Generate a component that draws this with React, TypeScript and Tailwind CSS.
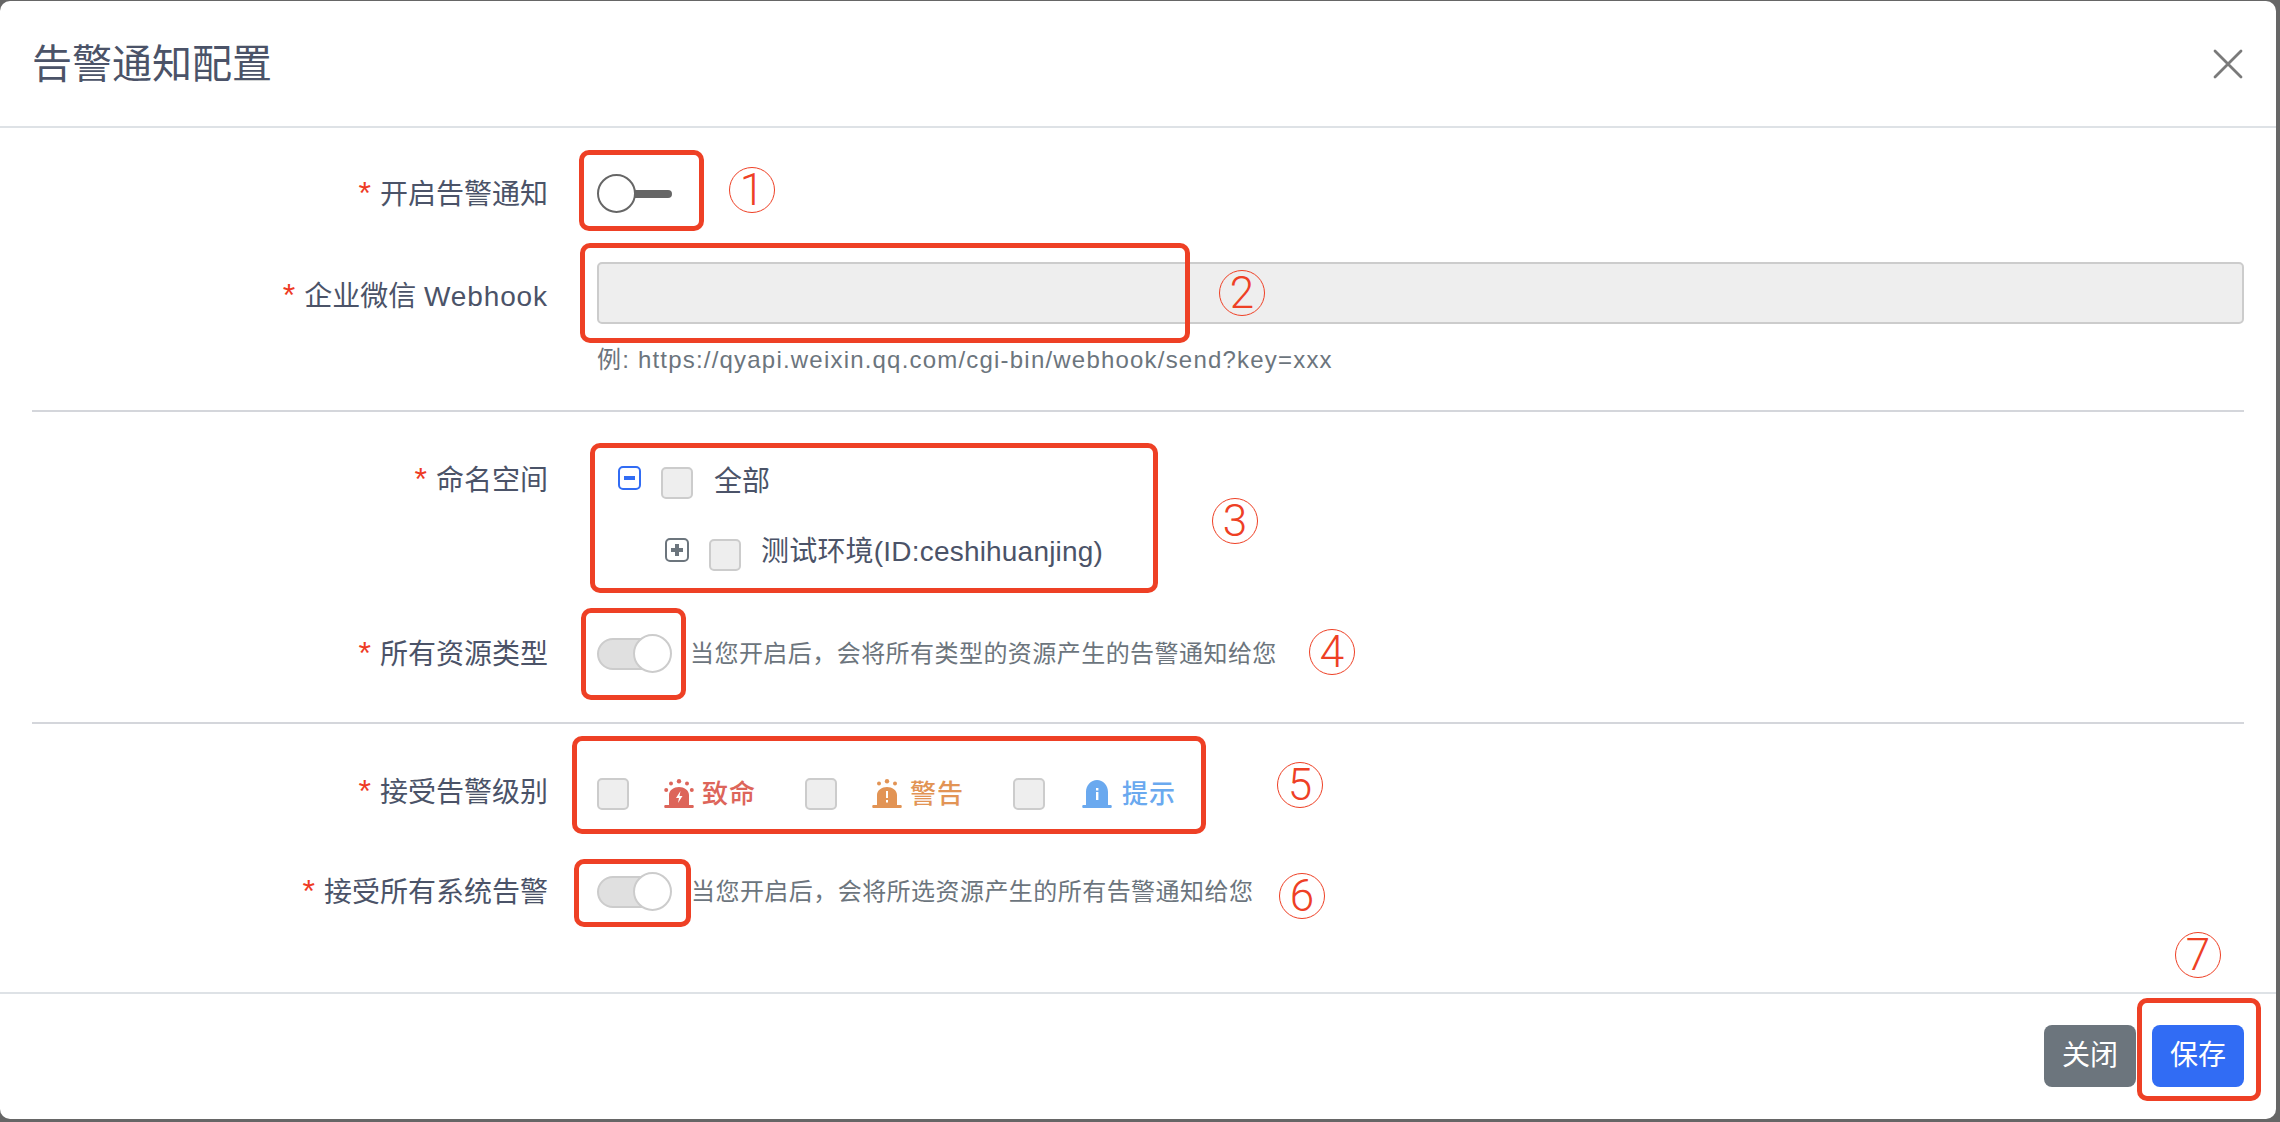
import React from "react";

const FONT = "font-['Liberation_Sans','Noto_Sans_CJK_SC',sans-serif]";

function Alarm({ color, kind, className }: { color: string; kind: "bolt" | "warn" | "info"; className: string }) {
  return (
    <svg viewBox="0 0 30 30" className={className} aria-hidden="true">
      {kind !== "info" && (
        <g fill={color}>
          <circle cx="15" cy="2.200" r="2.200" />
          <circle cx="7" cy="4.500" r="2" />
          <circle cx="23" cy="4.500" r="2" />
          {kind === "bolt" && <circle cx="2.200" cy="11" r="2" />}
          {kind === "bolt" && <circle cx="27.800" cy="11" r="2" />}
        </g>
      )}
      <path
        fill={color}
        d={
          kind === "info"
            ? "M4 26V13C4 6 9 1 15 1s11 5 11 12v13h3c1 0 1 3 0 3H1c-1 0-1-3 0-3z"
            : "M5 26V16C5 11 10 8 15 8s10 3 10 8v10h4c1 0 1 3 0 3H1c-1 0-1-3 0-3z"
        }
      />
      {kind === "bolt" && <path fill="#fff" d="M16.500 12l-4.500 7h3l-1 5 4.500-7h-3z" />}
      {kind === "warn" && <path fill="#fff" d="M14 12h2v7h-2zM14 21h2v2.500h-2z" />}
      {kind === "info" && <path fill="#fff" d="M14 9h2.400v2.500H14zM14 13h2.400v8H14z" />}
    </svg>
  );
}

function Label({ children, className = "" }: { children: React.ReactNode; className?: string }) {
  return (
    <div className={`w-[516px] shrink-0 text-right text-[28px] leading-[40px] text-[#4b5368] whitespace-nowrap ${className}`}>
      <span className="text-[#ee3a24] text-[32px] leading-[32px] mr-[9px]">*</span>
      {children}
    </div>
  );
}

function Check() {
  return <span className="block w-8 h-8 shrink-0 bg-[#eeeeee] border-2 border-[#cccccc] rounded-[5px]" />;
}

function Switch() {
  return (
    <span className="relative block w-[75px] h-[39px] shrink-0">
      <span className="absolute left-0 top-[4px] w-[60px] h-8 rounded-full bg-[#e0e0e0] border-2 border-[#cccccc]" />
      <span className="absolute left-[36px] top-0 w-[39px] h-[39px] rounded-full bg-white border-2 border-[#cccccc]" />
    </span>
  );
}

function Level({ color, kind, text, iconClass }: { color: string; kind: "bolt" | "warn" | "info"; text: string; iconClass: string }) {
  return (
    <div className="flex items-center gap-2">
      <Alarm color={color} kind={kind} className={iconClass} />
      <span className="text-[26px] leading-[30px] font-medium tracking-[1px]" style={{ color }}>
        {text}
      </span>
    </div>
  );
}

export default function App() {
  return (
    <div className={`relative w-[2280px] h-[1122px] overflow-hidden bg-[#666666] pt-px pr-1 pb-[3px] ${FONT}`}>
      <div className="flex flex-col h-full bg-white rounded-[10px]">
        <header className="flex items-center justify-between h-[125px] shrink-0 pl-8 pr-[33px]">
          <h1 className="text-[40px] leading-[48px] text-[#4b5368] font-normal">告警通知配置</h1>
          <svg viewBox="0 0 30 30" className="w-[30px] h-[30px]" aria-hidden="true">
            <path d="M2 2l26 26M28 2L2 28" stroke="#7a7a7a" strokeWidth="2.800" strokeLinecap="round" />
          </svg>
        </header>

        <main className="flex-1 flex flex-col px-8 border-t-2 border-[#dee2e6]">
          <div className="flex items-center gap-[49px] mt-[46px] h-[39px]">
            <Label className="pt-[2px]">开启告警通知</Label>
            <span className="relative block w-[75px] h-[39px]">
              <span className="absolute left-[30px] top-[16px] w-[45px] h-2 rounded-full bg-[#666666]" />
              <span className="absolute left-0 top-0 w-[39px] h-[39px] rounded-full bg-white border-2 border-[#666666]" />
            </span>
          </div>

          <div className="flex items-start gap-[49px] mt-[49px]">
            <Label className="pt-[15px]">
              企业微信 <span className="tracking-[0.9px]">Webhook</span>
            </Label>
            <div className="flex-1">
              <div className="h-[62px] bg-[#eeeeee] border-2 border-[#cccccc] rounded-[5px]" />
              <p className="mt-[22px] text-[24px] leading-[28px] tracking-[1.2px] text-[#6c757d] whitespace-nowrap">
                例: https://qyapi.weixin.qq.com/cgi-bin/webhook/send?key=xxx
              </p>
            </div>
          </div>

          <hr className="mt-[36px] border-0 h-[2px] bg-[#d4d6db]" />

          <div className="flex items-start gap-[49px] mt-[46px]">
            <Label className="pt-[3px]">命名空间</Label>
            <div className="flex-1 pt-[9px] text-[28px] leading-[32px] text-[#4b5368]">
              <div className="flex items-start h-8">
                <span className="flex items-center justify-center w-[23px] h-6 mt-[-1px] ml-[21px] border-2 border-[#316cf4] rounded-[5px]">
                  <span className="block w-[11px] h-[4px] bg-[#316cf4]" />
                </span>
                <span className="ml-[20px]"><Check /></span>
                <span className="ml-[21px] mt-[-1px]">全部</span>
              </div>
              <div className="flex items-start h-8 mt-[40px] ml-[68px]">
                <span className="relative block w-6 h-6 mt-[-1px] border-2 border-[#6c757d] rounded-[5px]">
                  <span className="absolute left-[4px] top-[8px] w-3 h-[4px] bg-[#6c757d]" />
                  <span className="absolute left-[8px] top-[4px] w-[4px] h-3 bg-[#6c757d]" />
                </span>
                <span className="ml-[20px]"><Check /></span>
                <span className="ml-[20px] mt-[-3px] whitespace-nowrap tracking-[0.2px]">测试环境(ID:ceshihuanjing)</span>
              </div>
            </div>
          </div>

          <div className="flex items-center gap-[49px] mt-[63px] h-[39px]">
            <Label className="pt-[2px]">所有资源类型</Label>
            <div className="flex items-center">
              <Switch />
              <span className="ml-[18px] text-[24px] leading-[32px] tracking-[0.45px] text-[#6c757d] whitespace-nowrap">
                当您开启后，会将所有类型的资源产生的告警通知给您
              </span>
            </div>
          </div>

          <hr className="mt-[49px] border-0 h-[2px] bg-[#d4d6db]" />

          <div className="flex items-start gap-[49px] mt-[46px]">
            <Label className="pt-[3px]">接受告警级别</Label>
            <div className="flex items-center pt-2">
              <Check />
              <div className="ml-[35px] w-[141px]">
                <Level color="#dd655a" kind="bolt" text="致命" iconClass="w-[30px] h-[30px] shrink-0" />
              </div>
              <Check />
              <div className="ml-[35px] w-[141px]">
                <Level color="#e29455" kind="warn" text="警告" iconClass="w-[30px] h-[30px] shrink-0" />
              </div>
              <Check />
              <div className="ml-[35px]">
                <Level color="#6aa9ef" kind="info" text="提示" iconClass="w-[34px] h-[30px] shrink-0" />
              </div>
            </div>
          </div>

          <div className="flex items-center gap-[49px] mt-[59px] h-[39px]">
            <Label className="pt-[2px]">接受所有系统告警</Label>
            <div className="flex items-center">
              <Switch />
              <span className="ml-[19px] text-[24px] leading-[32px] tracking-[0.45px] text-[#6c757d] whitespace-nowrap">
                当您开启后，会将所选资源产生的所有告警通知给您
              </span>
            </div>
          </div>
        </main>

        <footer className="flex justify-end gap-4 h-[127px] shrink-0 pt-[31px] pr-8 border-t-2 border-[#dee2e6]">
          <button className="w-[92px] h-[62px] rounded-lg bg-[#6c757d] text-white text-[28px]">关闭</button>
          <button className="w-[92px] h-[62px] rounded-lg bg-[#316cf4] text-white text-[28px]">保存</button>
        </footer>
      </div>

      <div className="absolute left-[579px] top-[150px] w-[125px] h-[81px] border-[5px] border-[#ee4025] rounded-[10px]" />
      <div className="absolute left-[580px] top-[243px] w-[610px] h-[100px] border-[5px] border-[#ee4025] rounded-[10px]" />
      <div className="absolute left-[590px] top-[443px] w-[568px] h-[150px] border-[5px] border-[#ee4025] rounded-[10px]" />
      <div className="absolute left-[581px] top-[608px] w-[105px] h-[92px] border-[5px] border-[#ee4025] rounded-[10px]" />
      <div className="absolute left-[572px] top-[736px] w-[634px] h-[98px] border-[5px] border-[#ee4025] rounded-[10px]" />
      <div className="absolute left-[574px] top-[859px] w-[117px] h-[68px] border-[5px] border-[#ee4025] rounded-[10px]" />
      <div className="absolute left-[2137px] top-[998px] w-[124px] h-[103px] border-[5px] border-[#ee4025] rounded-[10px]" />

      <span className="absolute left-[729px] top-[167px] flex items-center justify-center w-[46px] h-[46px] rounded-full border-[1.5px] border-[#ee4025] font-['Roboto'] font-light text-[44px] leading-none text-[#ee4025]">1</span>
      <span className="absolute left-[1219px] top-[270px] flex items-center justify-center w-[46px] h-[46px] rounded-full border-[1.5px] border-[#ee4025] font-['Roboto'] font-light text-[44px] leading-none text-[#ee4025]">2</span>
      <span className="absolute left-[1212px] top-[498px] flex items-center justify-center w-[46px] h-[46px] rounded-full border-[1.5px] border-[#ee4025] font-['Roboto'] font-light text-[44px] leading-none text-[#ee4025]">3</span>
      <span className="absolute left-[1309px] top-[629px] flex items-center justify-center w-[46px] h-[46px] rounded-full border-[1.5px] border-[#ee4025] font-['Roboto'] font-light text-[44px] leading-none text-[#ee4025]">4</span>
      <span className="absolute left-[1277px] top-[762px] flex items-center justify-center w-[46px] h-[46px] rounded-full border-[1.5px] border-[#ee4025] font-['Roboto'] font-light text-[44px] leading-none text-[#ee4025]">5</span>
      <span className="absolute left-[1279px] top-[873px] flex items-center justify-center w-[46px] h-[46px] rounded-full border-[1.5px] border-[#ee4025] font-['Roboto'] font-light text-[44px] leading-none text-[#ee4025]">6</span>
      <span className="absolute left-[2175px] top-[932px] flex items-center justify-center w-[46px] h-[46px] rounded-full border-[1.5px] border-[#ee4025] font-['Roboto'] font-light text-[44px] leading-none text-[#ee4025]">7</span>
    </div>
  );
}
